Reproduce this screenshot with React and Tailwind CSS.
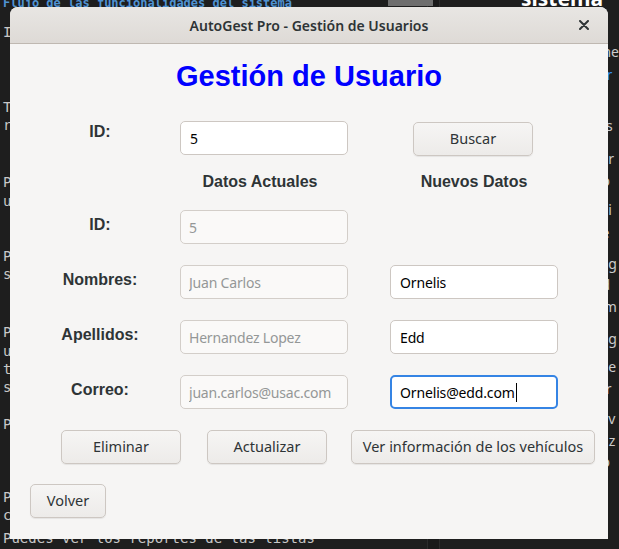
import React from "react";

const leftLines = [
  { text: "Ingresa al sistema con tu usuario", cls: "mt-[11px]" },
  { text: "Tienes acceso a todas las opciones", cls: "mt-[57px]" },
  { text: "rias del sistema", cls: "mt-[0px]" },
  { text: "Puedes cargar los datos masivos", cls: "mt-[39px]" },
  { text: "uarios de forma rapida", cls: "mt-[1px]" },
  { text: "Puedes buscar usuarios", cls: "mt-[37px]" },
  { text: "s y vehiculos", cls: "mt-[0px]" },
  { text: "Puedes modificar usuarios", cls: "mt-[40px]" },
  { text: "uarios registrados", cls: "mt-[1px]" },
  { text: "tualizar su informacion", cls: "mt-[0px]" },
  { text: "s del sistema", cls: "mt-[0px]" },
  { text: "Puedes eliminar registros", cls: "mt-[19px]" },
  { text: "Puedes generar reportes", cls: "mt-[55px]" },
  { text: "carga de los datos", cls: "mt-[0px]" },
];

const rightLines = [
  { text: "me", cls: "mt-[33px]" },
  { text: "gr", cls: "mt-[5px] text-[#3794ff]" },
  { text: "a", cls: "mt-[12px]" },
  { text: "es", cls: "mt-[3px]" },
  { text: "s r", cls: "mt-[15px]" },
  { text: "lo", cls: "mt-[4px]" },
  { text: "s i", cls: "mt-[11px]" },
  { text: "le", cls: "mt-[5px]" },
  { text: "s g", cls: "mt-[13px]" },
  { text: "id", cls: "mt-[3px]" },
  { text: "rm", cls: "mt-[4px]" },
  { text: "s g", cls: "mt-[14px]" },
  { text: "s e", cls: "mt-[10px]" },
  { text: "ar", cls: "mt-[4px]" },
  { text: "s v", cls: "mt-[12px]" },
  { text: "viz", cls: "mt-[4px]" },
  { text: "lo", cls: "mt-[3px]" },
];

const sans = { fontFamily: "'Liberation Sans', Arial, sans-serif" };

function Entry({ value, disabled, focused }) {
  let cls =
    "h-[34px] w-[168px] rounded-[5px] border border-[#cdc7c2] bg-white px-[9px] flex items-center text-[14px] tracking-[-0.15px] text-black";
  if (disabled)
    cls =
      "h-[34px] w-[168px] rounded-[5px] border border-[#d3cec9] bg-[#faf9f8] px-[8px] flex items-center text-[14px] tracking-[-0.2px] text-[#949797]";
  else if (focused)
    cls =
      "h-[34px] w-[168px] rounded-[5px] border-2 border-[#3584e4] bg-white px-[8px] flex items-center text-[14px] tracking-[-0.15px] text-black";
  return (
    <div className={cls}>
      <span className="whitespace-nowrap overflow-hidden">{value}</span>
      {focused && <span className="w-px h-[19px] bg-black ml-[1px]" />}
    </div>
  );
}

function Btn({ children, w }) {
  return (
    <button
      className={`${w} h-[34px] rounded-[5px] border border-[#cdc7c2] bg-gradient-to-b from-[#f6f5f4] to-[#edebe9] text-[14.5px] text-[#2e3436] shadow-[0_1px_1px_rgba(0,0,0,0.07)]`}
    >
      {children}
    </button>
  );
}

function Label({ children, shift = "pb-[4px]" }) {
  return (
    <div
      className={`w-[120px] h-[34px] flex items-center justify-center font-bold text-[16px] text-[#2e3436] ${shift}`}
      style={sans}
    >
      {children}
    </div>
  );
}

export default function App() {
  return (
    <div className="relative w-[619px] h-[549px] overflow-hidden bg-[#1e1e1e] font-['Noto_Sans',sans-serif]">
      {/* editor panes behind the window */}
      <div className="flex h-full">
        <div className="w-[437px] flex flex-col font-['DejaVu_Sans_Mono',monospace] text-[14px] leading-[18px] text-[#c8c8c8] pl-[3px]">
          <div className="-mt-[6px] font-bold text-[12px] text-[#4f93d3] whitespace-nowrap">Flujo de las funcionalidades del sistema</div>
          {leftLines.map((l, i) => (
            <div key={i} className={`${l.cls} whitespace-nowrap`}>
              {l.text}
            </div>
          ))}
          <div className="mt-auto mb-[2px] whitespace-nowrap">Puedes ver los reportes de las listas</div>
        </div>
        <div className="w-[13px] border-x border-[#2b2b2b] bg-[#1a1a1a]" />
        <div className="flex-1 flex flex-col text-[14px] leading-[18px] text-[#cccccc]">
          <div className="-mt-[14px] text-right pr-[16px] font-bold text-[21px] leading-[24px] text-white">sistema</div>
          {rightLines.map((l, i) => (
            <div key={i} className={`${l.cls} pl-[158px] whitespace-nowrap`}>
              {l.text}
            </div>
          ))}
        </div>
      </div>
      <div className="absolute left-[388px] top-0 w-[45px] h-[6px] bg-[#6e6e6e]" />

      {/* window */}
      <div className="absolute left-[10px] top-[7px] w-[598px] h-[532px] rounded-t-[8px] overflow-hidden bg-[#f6f5f4] flex flex-col">
        <div className="h-[37px] shrink-0 relative flex items-center justify-center bg-gradient-to-b from-[#e8e6e3] to-[#dedad6] border-b border-[#bfb8b1]">
          <span className="text-[14px] font-semibold text-[#2e3436]">AutoGest Pro - Gestión de Usuarios</span>
          <svg className="absolute right-[19px] top-[13px] w-[10px] h-[10px]" viewBox="0 0 10 10">
            <path d="M1 1L9 9M9 1L1 9" stroke="#2e3436" strokeWidth="2" strokeLinecap="round" />
          </svg>
        </div>

        <div className="flex flex-col pl-[30px]">
          <h1 className="mt-[15px] ml-[-30px] text-center text-[29px] leading-[34px] font-bold text-[#0000ff]" style={sans}>
            Gestión de Usuario
          </h1>

          <div className="mt-[28px] h-[34px] flex items-start">
            <Label shift="pb-[12px]">ID:</Label>
            <div className="ml-[20px]">
              <Entry value="5" />
            </div>
            <div className="ml-[65px] mt-[1px]">
              <Btn w="w-[120px]">Buscar</Btn>
            </div>
          </div>

          <div className="mt-[17px] flex font-bold text-[16px] leading-[20px] text-[#2e3436]" style={sans}>
            <div className="w-[120px]" />
            <div className="ml-[20px] w-[160px] text-center">Datos Actuales</div>
            <div className="ml-[50px] w-[168px] text-center">Nuevos Datos</div>
          </div>

          <div className="mt-[18px] flex items-center">
            <Label>ID:</Label>
            <div className="ml-[20px]">
              <Entry value="5" disabled />
            </div>
          </div>

          <div className="mt-[21px] flex items-center">
            <Label>Nombres:</Label>
            <div className="ml-[20px]">
              <Entry value="Juan Carlos" disabled />
            </div>
            <div className="ml-[42px]">
              <Entry value="Ornelis" />
            </div>
          </div>

          <div className="mt-[21px] flex items-center">
            <Label>Apellidos:</Label>
            <div className="ml-[20px]">
              <Entry value="Hernandez Lopez" disabled />
            </div>
            <div className="ml-[42px]">
              <Entry value="Edd" />
            </div>
          </div>

          <div className="mt-[21px] flex items-center">
            <Label>Correo:</Label>
            <div className="ml-[20px]">
              <Entry value="juan.carlos@usac.com" disabled />
            </div>
            <div className="ml-[42px]">
              <Entry value="Ornelis@edd.com" focused />
            </div>
          </div>

          <div className="mt-[21px] ml-[21px] flex gap-[26px]">
            <Btn w="w-[120px]">Eliminar</Btn>
            <div className="flex gap-[24px]">
              <Btn w="w-[120px]">Actualizar</Btn>
              <Btn w="w-[244px]">Ver información de los vehículos</Btn>
            </div>
          </div>

          <div className="mt-[20px] ml-[-10px]">
            <Btn w="w-[76px]">Volver</Btn>
          </div>
        </div>
      </div>
    </div>
  );
}
